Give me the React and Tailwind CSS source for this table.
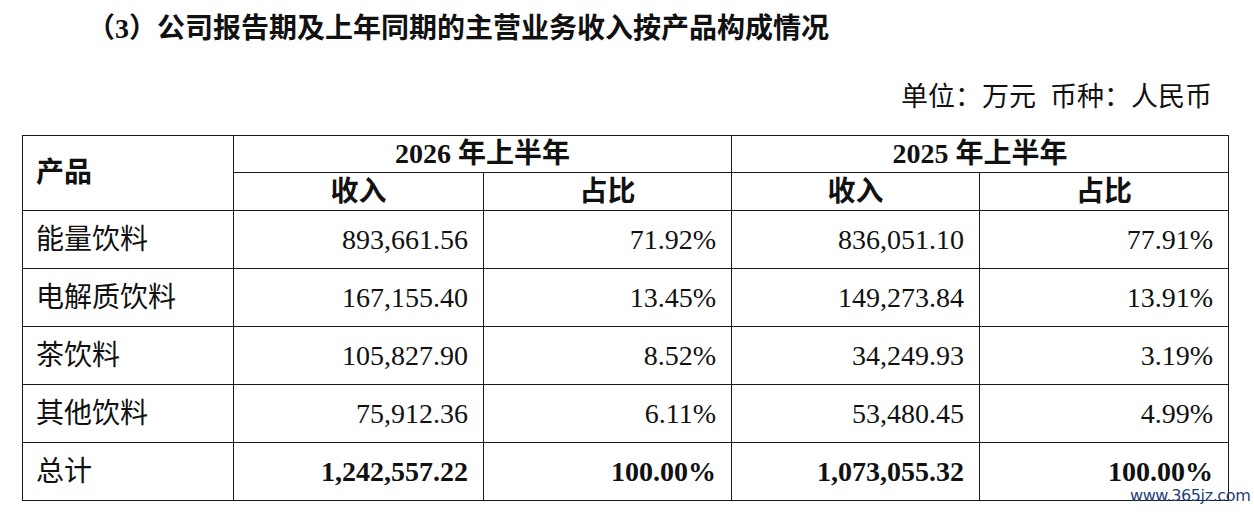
import React from "react";

const rows = [
  ["能量饮料", "893,661.56", "71.92%", "836,051.10", "77.91%"],
  ["电解质饮料", "167,155.40", "13.45%", "149,273.84", "13.91%"],
  ["茶饮料", "105,827.90", "8.52%", "34,249.93", "3.19%"],
  ["其他饮料", "75,912.36", "6.11%", "53,480.45", "4.99%"],
];

const font = { fontFamily: '"Liberation Serif", "Noto Sans CJK SC", serif' };

export default function App() {
  const cell = "border-[1.5px] border-[#1a1a1a] h-[58px] p-0 align-middle";
  const num = cell + " text-right pr-[15px]";
  const th = "border-[1.5px] border-[#1a1a1a] font-bold text-center p-0";
  return (
    <div className="relative w-[1254px] h-[512px] bg-white text-[#111] overflow-hidden" style={font}>
      <div className="pt-[15px] pl-[87px] text-[28px] leading-[28px] font-bold whitespace-nowrap">
        （3）公司报告期及上年同期的主营业务收入按产品构成情况
      </div>
      <div className="mt-[40px] pr-[42px] flex justify-end gap-[14px] text-[27px] leading-[28px] whitespace-nowrap">
        <span>单位：万元</span>
        <span>币种：人民币</span>
      </div>
      <div className="mt-[24px] ml-[22px]">
        <table className="table-fixed border-collapse w-[1206px] text-[28px] leading-[30px]">
          <colgroup>
            <col className="w-[211px]" />
            <col className="w-[250px]" />
            <col className="w-[248px]" />
            <col className="w-[248px]" />
            <col className="w-[249px]" />
          </colgroup>
          <thead>
            <tr className="h-[37px]">
              <th rowSpan={2} className="border-[1.5px] border-[#1a1a1a] text-left pl-[13px] font-bold align-middle">
                产品
              </th>
              <th colSpan={2} className={th + " h-[37px]"}>
                2026 年上半年
              </th>
              <th colSpan={2} className={th + " h-[37px]"}>
                2025 年上半年
              </th>
            </tr>
            <tr className="h-[38px]">
              <th className={th + " h-[38px]"}>收入</th>
              <th className={th + " h-[38px]"}>占比</th>
              <th className={th + " h-[38px]"}>收入</th>
              <th className={th + " h-[38px]"}>占比</th>
            </tr>
          </thead>
          <tbody>
            {rows.map((r) => (
              <tr key={r[0]}>
                <td className={cell + " text-left pl-[13px]"}>{r[0]}</td>
                <td className={num}>{r[1]}</td>
                <td className={num}>{r[2]}</td>
                <td className={num}>{r[3]}</td>
                <td className={num}>{r[4]}</td>
              </tr>
            ))}
            <tr>
              <td className={cell + " text-left pl-[13px]"}>总计</td>
              <td className={num + " font-bold"}>1,242,557.22</td>
              <td className={num + " font-bold"}>100.00%</td>
              <td className={num + " font-bold"}>1,073,055.32</td>
              <td className={num + " font-bold"}>100.00%</td>
            </tr>
          </tbody>
        </table>
      </div>
      <div
        className="absolute left-[1130px] top-[487px] text-[16px] leading-[18px] text-[#1f3f7a] whitespace-nowrap tracking-[-0.4px]"
        style={{ fontFamily: '"DejaVu Sans", sans-serif' }}
      >
        www.365jz.com
      </div>
    </div>
  );
}
